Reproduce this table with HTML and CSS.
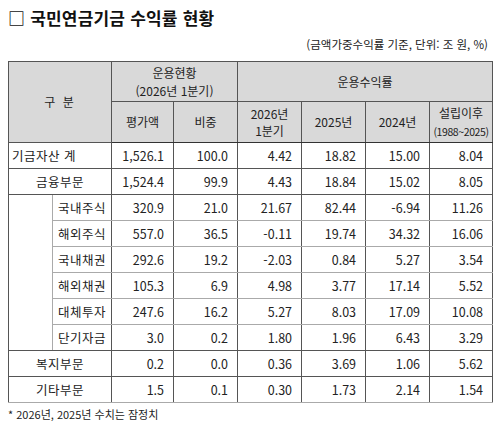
FILE: index.html
```html
<!DOCTYPE html>
<html lang="ko">
<head>
    <meta charset="UTF-8">
    <meta name="viewport" content="width=device-width, initial-scale=1.0">
    <title>국민연금기금 수익률 현황</title>
    <link rel="stylesheet" href="styles.css">
</head>
<body>

    <div class="report">
        <h1>□ 국민연금기금 수익률 현황</h1>
        <p class="unit">(금액가중수익률 기준, 단위: 조 원, %)</p>

        <!-- 수익률 표 -->
        <table class="returns">
            <colgroup>
                <col class="c-indent">
                <col class="c-name">
                <col class="c-amount">
                <col class="c-share">
                <col class="c-rate">
                <col class="c-rate">
                <col class="c-rate">
                <col class="c-total">
            </colgroup>
            <thead>
                <tr class="head-1">
                    <th colspan="2" rowspan="2" class="spaced">구 분</th>
                    <th colspan="2">운용현황<br>(2026년 1분기)</th>
                    <th colspan="4">운용수익률</th>
                </tr>
                <tr class="head-2">
                    <th>평가액</th>
                    <th>비중</th>
                    <th>2026년<br>1분기</th>
                    <th>2025년</th>
                    <th>2024년</th>
                    <th>설립이후<br><span class="period">(1988~2025)</span></th>
                </tr>
            </thead>
            <tbody>
                <tr class="group-end">
                    <td colspan="2" class="label left">기금자산 계</td>
                    <td>1,526.1</td><td>100.0</td><td>4.42</td><td>18.82</td><td>15.00</td><td>8.04</td>
                </tr>
                <tr class="group-end">
                    <td colspan="2" class="label">금융부문</td>
                    <td>1,524.4</td><td>99.9</td><td>4.43</td><td>18.84</td><td>15.02</td><td>8.05</td>
                </tr>
                <tr>
                    <td rowspan="6" class="indent"></td>
                    <td class="label sub">국내주식</td>
                    <td>320.9</td><td>21.0</td><td>21.67</td><td>82.44</td><td>-6.94</td><td>11.26</td>
                </tr>
                <tr>
                    <td class="label sub">해외주식</td>
                    <td>557.0</td><td>36.5</td><td>-0.11</td><td>19.74</td><td>34.32</td><td>16.06</td>
                </tr>
                <tr>
                    <td class="label sub">국내채권</td>
                    <td>292.6</td><td>19.2</td><td>-2.03</td><td>0.84</td><td>5.27</td><td>3.54</td>
                </tr>
                <tr>
                    <td class="label sub">해외채권</td>
                    <td>105.3</td><td>6.9</td><td>4.98</td><td>3.77</td><td>17.14</td><td>5.52</td>
                </tr>
                <tr>
                    <td class="label sub">대체투자</td>
                    <td>247.6</td><td>16.2</td><td>5.27</td><td>8.03</td><td>17.09</td><td>10.08</td>
                </tr>
                <tr class="group-end">
                    <td class="label sub">단기자금</td>
                    <td>3.0</td><td>0.2</td><td>1.80</td><td>1.96</td><td>6.43</td><td>3.29</td>
                </tr>
                <tr class="group-end">
                    <td colspan="2" class="label">복지부문</td>
                    <td>0.2</td><td>0.0</td><td>0.36</td><td>3.69</td><td>1.06</td><td>5.62</td>
                </tr>
                <tr>
                    <td colspan="2" class="label">기타부문</td>
                    <td>1.5</td><td>0.1</td><td>0.30</td><td>1.73</td><td>2.14</td><td>1.54</td>
                </tr>
            </tbody>
        </table>

        <p class="note">* 2026년, 2025년 수치는 잠정치</p>
    </div>

</body>
</html>
```

FILE: styles.css
```css
/* 기본 */
body {
    font-family: "Noto Sans CJK KR", "Noto Sans", sans-serif;
    color: #222;
    background-color: #fff;
    margin: 0;
    padding: 8px;
}

.report {
    width: 484px;
}

h1 {
    margin: 0;
    font-size: 17px;
    line-height: 20px;
    font-weight: bold;
    color: #111;
    letter-spacing: 0.2px;
}

.unit {
    margin: 8px 0 0;
    padding-right: 4px;
    font-size: 11.5px;
    line-height: 16px;
    text-align: right;
}

/* 표 */
.returns {
    width: 484px;
    margin-top: 9px;
    border-collapse: collapse;
    table-layout: fixed;
    border: 1px solid #333;
    font-size: 12.5px;
}

.c-indent { width: 44px; }
.c-name { width: 59px; }
.c-amount { width: 62px; }
.c-share { width: 64px; }
.c-rate { width: 64px; }
.c-total { width: 63px; }

th {
    background-color: #d9d9d9;
    font-weight: normal;
    font-size: 12px;
    line-height: 17.5px;
    padding: 0;
    border: 1px solid #555;
}

.head-1 th {
    height: 39px;
}

.head-2 th {
    height: 40px;
}

.spaced {
    letter-spacing: 2px;
}

.period {
    font-size: 10.5px;
    letter-spacing: -0.4px;
}

td {
    height: 25px;
    padding: 0 9px 0 0;
    text-align: right;
    line-height: 16px;
    border-left: 1px solid #555;
    border-right: 1px solid #555;
    border-top: 1px solid #aaa;
    border-bottom: 1px solid #aaa;
}

thead tr:last-child th {
    border-bottom: 1px solid #333;
}

.group-end td {
    border-bottom: 1px solid #555;
}

td.label {
    text-align: center;
    padding: 0;
    letter-spacing: 0.5px;
}

td.left {
    text-align: left;
    padding-left: 3px;
}

td.indent {
    border-right: 1px solid #aaa;
    border-bottom: 1px solid #555;
}

.note {
    margin: 3px 0 0;
    font-size: 11px;
    line-height: 16px;
}
```
